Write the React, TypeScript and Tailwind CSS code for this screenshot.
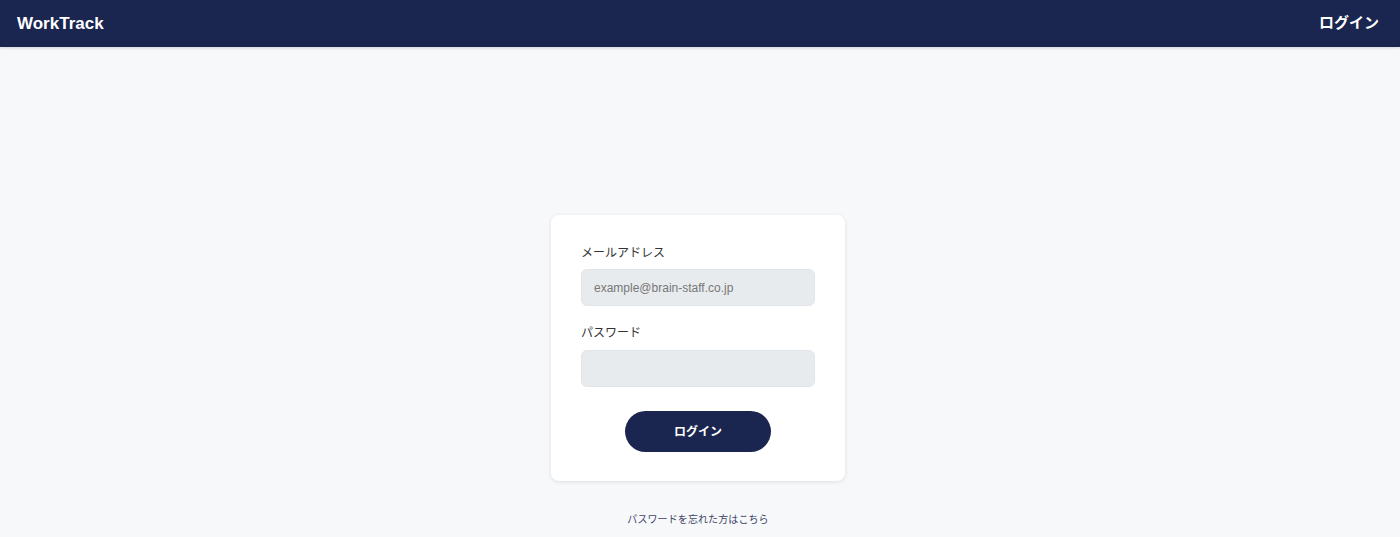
export default function App() {
  const jp = "font-['Liberation_Sans','Noto_Sans_CJK_JP',sans-serif]";
  return (
    <div className={`min-h-[537px] bg-[#f7f8fa] ${jp}`}>
      <header className="h-[47px] bg-[#1b2650] flex items-center justify-between pl-[17px] pr-[21px] shadow-[0_1px_3px_rgba(0,0,0,0.15)]">
        <span className="text-white font-bold text-[17px]">WorkTrack</span>
        <span className="text-white font-bold text-[15px]">ログイン</span>
      </header>
      <main className="flex flex-col items-center pt-[168px] pr-[4px]">
        <div className="w-[294px] bg-white rounded-[8px] shadow-[0_1px_4px_rgba(0,0,0,0.1)] px-[30px] pt-[29px] pb-[29px]">
          <label className="block text-[12px] text-[#333] leading-[18px] mb-[7px]">メールアドレス</label>
          <input
            className="block w-full h-[37px] rounded-[6px] bg-[#e8ebee] border border-[#e1e4e8] px-[12px] text-[12px] text-[#333] placeholder:text-[#777] outline-none"
            placeholder="example@brain-staff.co.jp"
          />
          <label className="block text-[12px] text-[#333] leading-[18px] mt-[18px] mb-[8px]">パスワード</label>
          <input
            type="password"
            className="block w-full h-[37px] rounded-[6px] bg-[#e8ebee] border border-[#e1e4e8] px-[12px] text-[12px] outline-none"
          />
          <div className="flex justify-center mt-[24px]">
            <button className="w-[146px] h-[41px] rounded-full bg-[#1b2650] text-white font-bold text-[12px]">
              ログイン
            </button>
          </div>
        </div>
        <a className="mt-[31px] text-[10px] text-[#3d4466] tracking-[0.1px]">パスワードを忘れた方はこちら</a>
      </main>
    </div>
  );
}
